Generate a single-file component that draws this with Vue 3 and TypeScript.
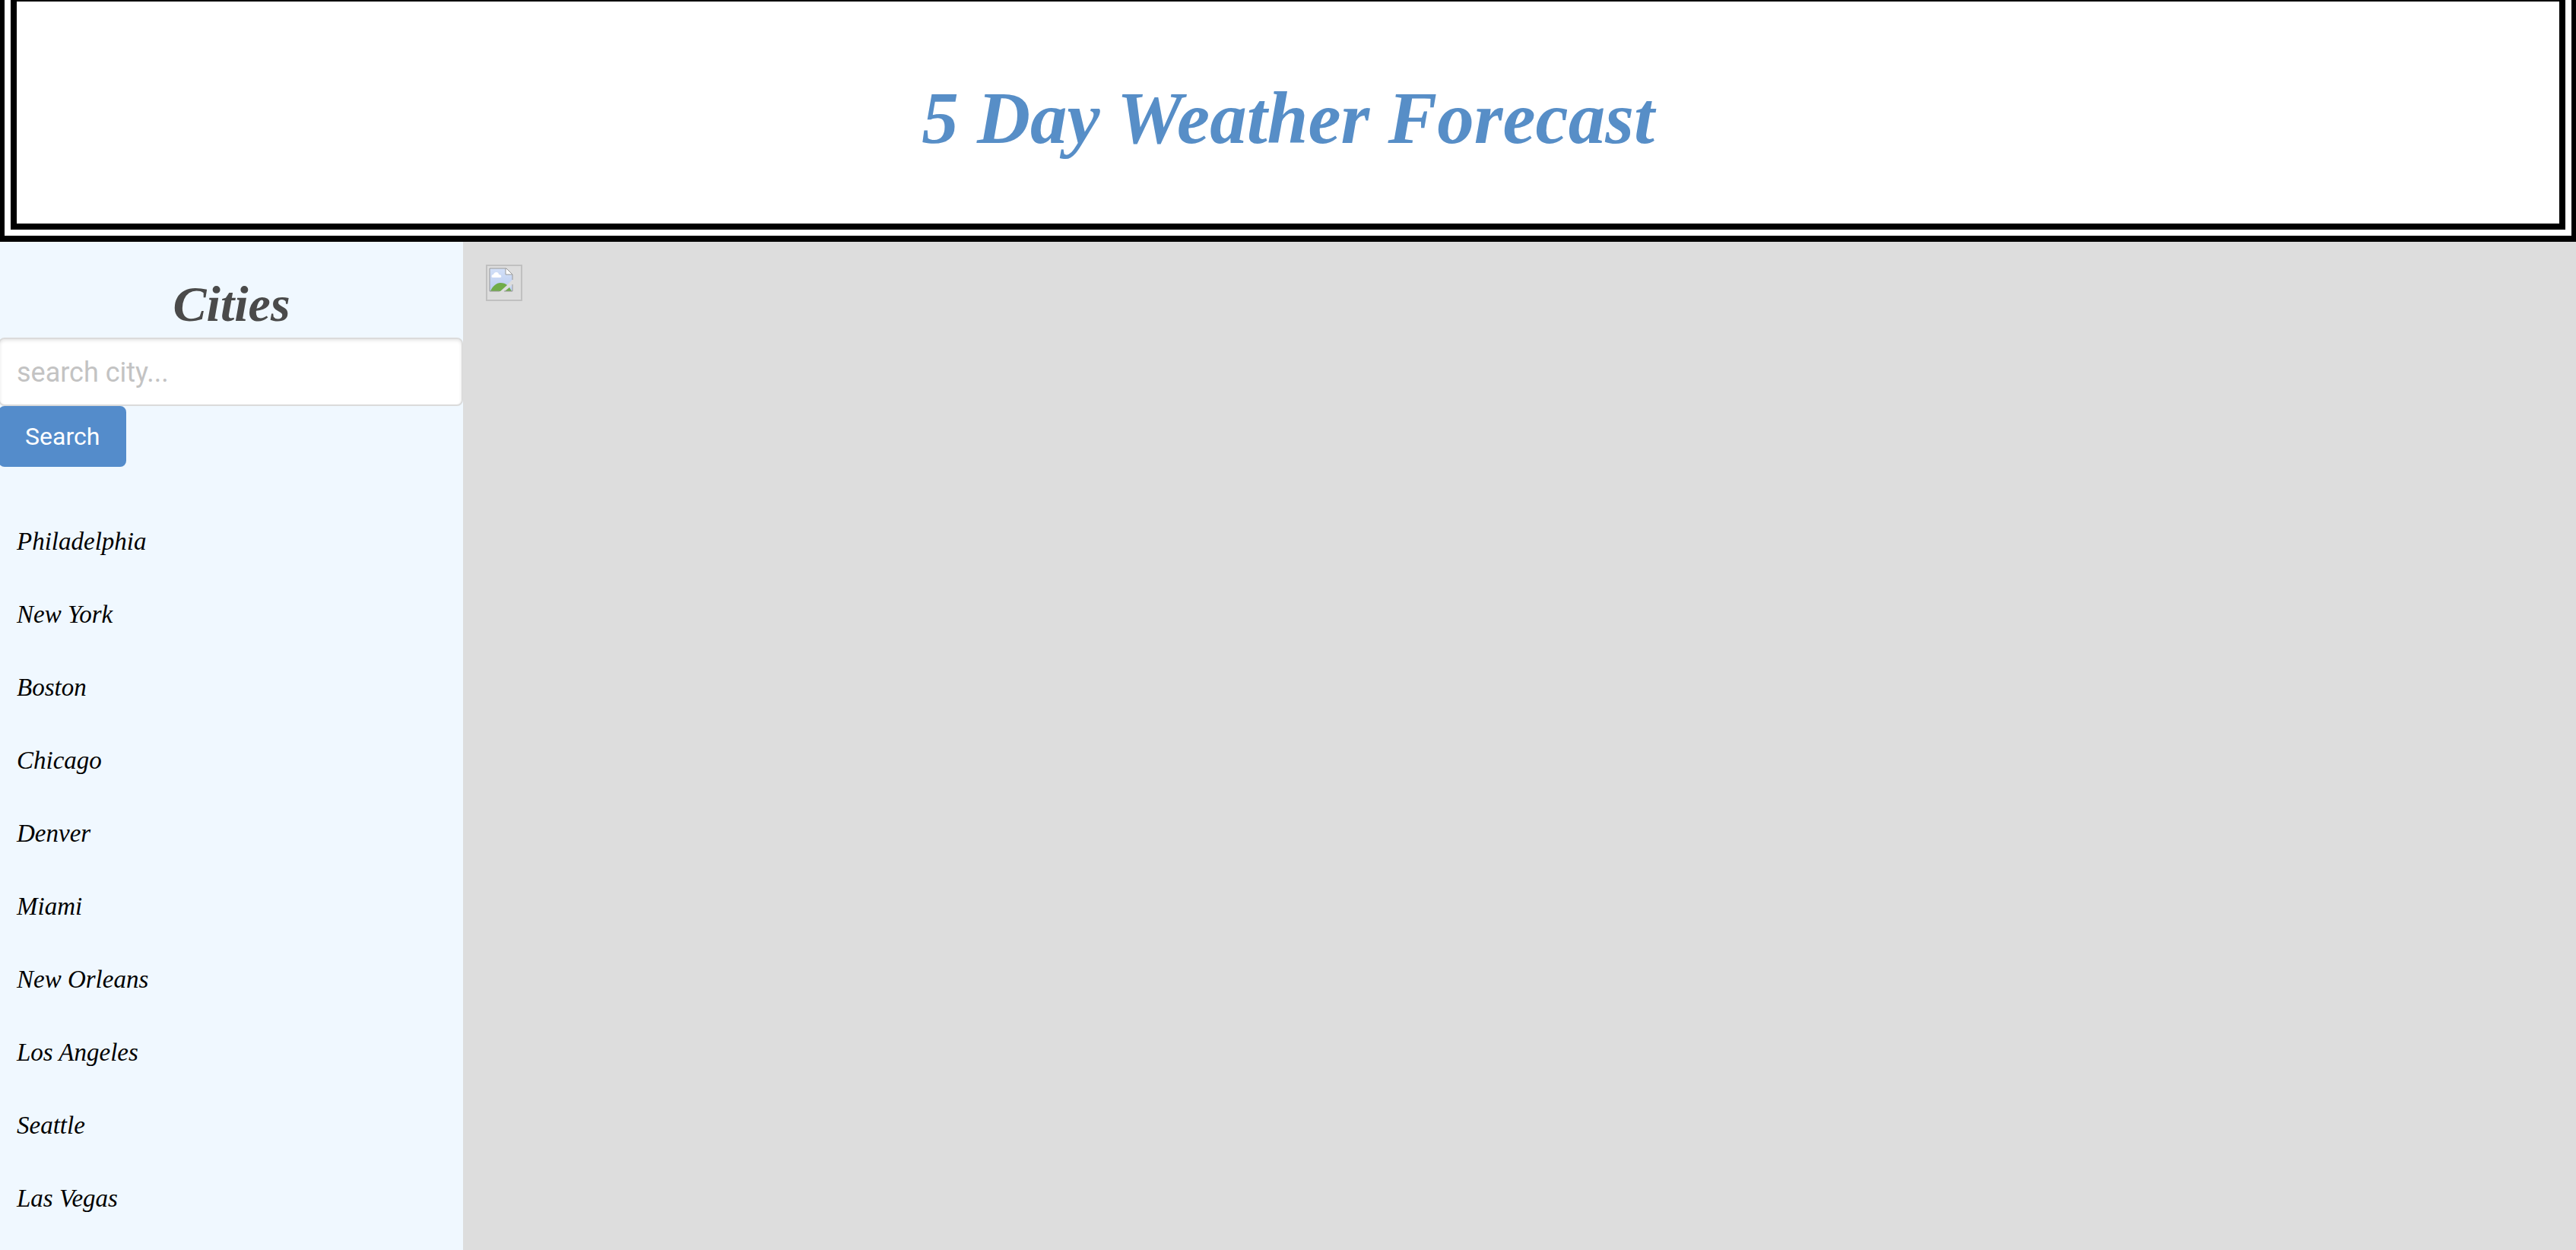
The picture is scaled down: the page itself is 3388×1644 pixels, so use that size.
<script setup lang="ts">
import { ref } from 'vue'

const query = ref('')
const cities: string[] = [
  'Philadelphia',
  'New York',
  'Boston',
  'Chicago',
  'Denver',
  'Miami',
  'New Orleans',
  'Los Angeles',
  'Seattle',
  'Las Vegas',
]
</script>

<template>
  <div class="page">
    <header class="banner">
      <div class="banner-inner">
        <h1 class="banner-title">5 Day Weather Forecast</h1>
      </div>
    </header>
    <div class="columns">
      <aside class="sidebar">
        <h2 class="sidebar-title">Cities</h2>
        <form class="search" @submit.prevent>
          <input v-model="query" class="search-input" type="text" placeholder="search city..." aria-label="Search city" />
          <button class="search-button" type="submit">Search</button>
        </form>
        <ul class="cities">
          <li v-for="city in cities" :key="city">
            <a class="city" href="#">{{ city }}</a>
          </li>
        </ul>
      </aside>
      <main class="forecast">
        <div class="missing">
          <svg viewBox="0 0 32 32" width="32" height="32" aria-hidden="true">
            <defs>
              <linearGradient id="sky" x1="0" y1="0" x2="0" y2="1">
                <stop offset="0" stop-color="#d3e0f8" />
                <stop offset="1" stop-color="#b9cbee" />
              </linearGradient>
            </defs>
            <path d="M1 1H23L31 9V16L15 31H1Z" fill="url(#sky)" />
            <path d="M31 22V31H21Z" fill="url(#sky)" />
            <path d="M2 31C5 24 10 20 15 20C19 20 22 21 24 23L15 31Z" fill="#70ac49" />
            <path d="M27 26L30 31H21Z" fill="#70ac49" />
            <path d="M5 13C3 13 3 9 6 9C7 5 13 5 13 9C17 9 17 13 15 13Z" fill="#fff" />
            <path d="M22 1V9H31Z" fill="#fff" />
            <path d="M31 16V9L23 1H1V31H14M22 1V9H31M31 22V31H20" fill="none" stroke="#999" stroke-width="1" />
          </svg>
        </div>
      </main>
    </div>
  </div>
</template>

<style>
body {
  margin: 0;
}
</style>

<style scoped>
.page {
  display: flex;
  flex-direction: column;
  min-height: 100vh;
  overflow: hidden;
}
.banner {
  padding: 0 8px 8px;
  border: solid #000;
  border-width: 0 6px 8px;
  background: #fff;
}
.banner-inner {
  border: solid #000;
  border-width: 2px 8px 8px;
  padding: 104px 24px 88px;
}
.banner-title {
  margin: 0;
  color: #578ec7;
  font: italic 700 97px/100px "Liberation Serif", serif;
  text-align: center;
}
.columns {
  display: flex;
  flex: 1;
}
.sidebar {
  width: 17.98%;
  background: #f0f8ff;
}
.sidebar-title {
  margin: 0;
  padding: 46px 0 8px;
  color: #4a4a4a;
  font: italic 700 66px/72px "Liberation Serif", serif;
  text-align: center;
}
.search {
  display: flex;
  flex-direction: column;
  align-items: flex-start;
  margin: 0 0 50px -2px;
}
.search-input {
  box-sizing: border-box;
  width: 100%;
  height: 90px;
  padding: 2px 22px 0;
  border: 2px solid #dbdbdb;
  border-radius: 8px;
  background: #fff;
  box-shadow: inset 0 2px 4px rgba(10, 10, 10, 0.1);
  color: #363636;
  font: 36px "Roboto", sans-serif;
}
.search-input::placeholder {
  color: #c3c3c3;
  opacity: 1;
}
.search-button {
  height: 80px;
  padding: 0 35px;
  border: 0;
  border-radius: 8px;
  background: #548ccb;
  color: #fff;
  font: 32px "Roboto", sans-serif;
}
.cities {
  margin: 0;
  padding: 0;
  list-style: none;
}
.city {
  display: block;
  padding: 24px 22px;
  color: #000;
  font: italic 33px/48px "Liberation Serif", serif;
  text-decoration: none;
}
.forecast {
  flex: 1;
  padding: 30px;
  background: #ddd;
}
.missing {
  box-sizing: border-box;
  width: 48px;
  height: 48px;
  padding: 2px;
  border: 2px solid #c0c0c0;
}
.missing svg {
  display: block;
}
</style>
